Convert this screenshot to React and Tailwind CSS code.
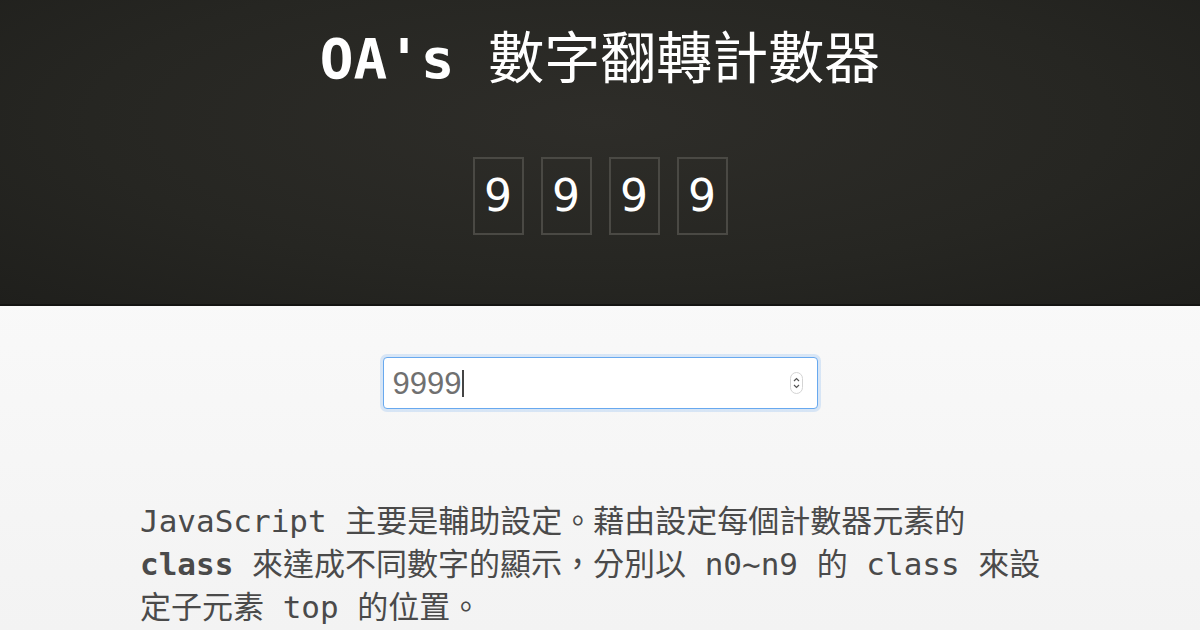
import React from 'react';

const mono = { fontFamily: '"DejaVu Sans Mono", "Noto Sans CJK TC", monospace' };

const Digit = ({ n }) => (
  <div className="w-[51px] h-[78px] border-2 border-[#4a4944] flex items-center justify-center text-white text-[44px] leading-none"
    style={{ fontFamily: '"DejaVu Sans", sans-serif' }}>
    {n}
  </div>
);

export default function App() {
  const value = '9999';
  return (
    <div className="w-[1200px] h-[630px] overflow-hidden bg-[linear-gradient(to_bottom,#fefefe,#f3f3f3)]">
      {/* header */}
      <div className="h-[306px] border-b-2 border-[#141412] bg-[radial-gradient(ellipse_at_50%_40%,#2e2d29,#262622_60%,#1f1f1c)] flex flex-col items-center">
        <h1 className="mt-[25px] text-[56px] leading-[68px] font-bold text-white tracking-normal" style={mono}>
          OA's <span className="font-normal">數字翻轉計數器</span>
        </h1>
        <div className="mt-[64px] flex gap-[17px]">
          {value.split('').map((n, i) => <Digit key={i} n={n} />)}
        </div>
      </div>

      {/* input */}
      <div className="flex justify-center mt-[51px]">
        <div className="w-[435px] h-[52px] rounded-[4px] border border-[#68a9ef] bg-white shadow-[0_0_0_3px_rgba(120,175,240,0.25)] flex items-center pl-[9px] pr-[14px]">
          <span className="text-[31px] leading-none text-[#707070]" style={{ fontFamily: '"Liberation Sans", Arial, sans-serif' }}>{value}</span>
          <span className="w-[2px] h-[27px] bg-[#444] ml-[1px]" />
          <div className="ml-auto w-[13px] h-[22px] rounded-full border border-[#d4d4d4] flex flex-col items-center justify-center gap-[2px]">
            <svg width="7" height="5" viewBox="0 0 7 5"><path d="M1 4L3.5 1.5L6 4" fill="none" stroke="#555" strokeWidth="1.2" /></svg>
            <svg width="7" height="5" viewBox="0 0 7 5"><path d="M1 1L3.5 3.5L6 1" fill="none" stroke="#555" strokeWidth="1.2" /></svg>
          </div>
        </div>
      </div>

      {/* description */}
      <p className="mx-auto w-[920px] mt-[91px] text-[31px] leading-[43px] text-[#4a4a4a]" style={mono}>
        JavaScript 主要是輔助設定。藉由設定每個計數器元素的 <b className="font-bold">class</b> 來達成不同數字的顯示，分別以 n0~n9 的 class 來設定子元素 top 的位置。
      </p>
    </div>
  );
}
